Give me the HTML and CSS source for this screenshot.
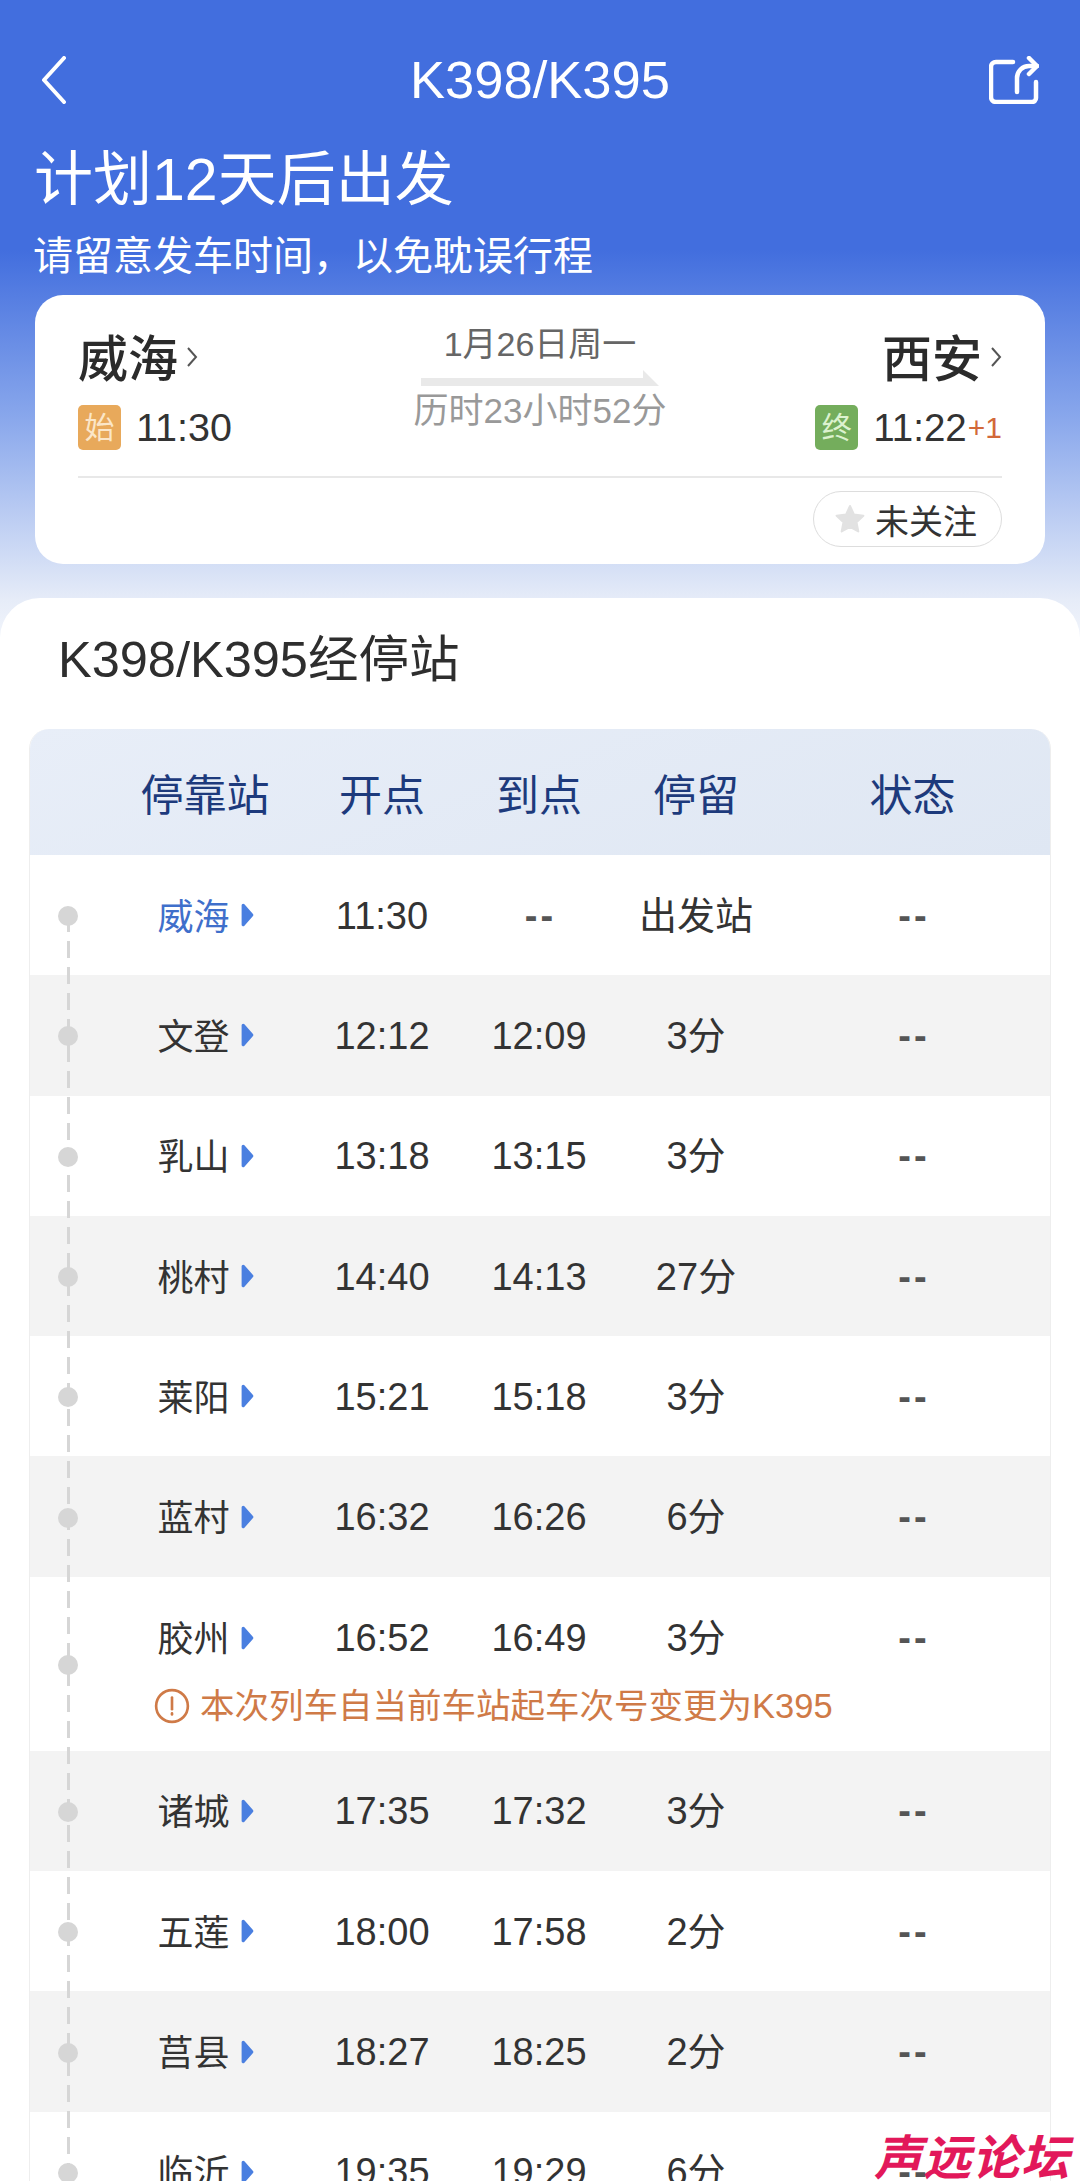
FILE: index.html
```html
<!DOCTYPE html>
<html lang="zh-CN">
<head>
  <meta charset="UTF-8" />
  <meta name="viewport" content="width=device-width, initial-scale=1.0" />
  <title>K398/K395</title>
  <link rel="stylesheet" href="styles.css">
</head>
<body>
  <div class="page">
    <header class="hero">
      <div class="nav">
        <svg class="back" viewBox="0 0 26 48"><path d="M23 2 3 24l20 22"/></svg>
        <div class="nav-title">K398/K395</div>
        <svg class="share" viewBox="0 0 50 48">
          <path d="M24 6H7a5 5 0 0 0-5 5v30a5 5 0 0 0 5 5h36a4 4 0 0 0 4-4V26"/>
          <path d="M28 36V22a12 12 0 0 1 12-12h8"/>
          <path d="M40 2l8 8-8 8"/>
        </svg>
      </div>
      <h1 class="headline">计划12天后出发</h1>
      <p class="subline">请留意发车时间，以免耽误行程</p>

      <section class="card">
        <div class="route">
          <div class="end">
            <div class="city">威海<svg class="chev" viewBox="0 0 12 22"><path d="M2 2l8 9-8 9"/></svg></div>
            <div class="when">
              <span class="badge badge-start">始</span>
              <span class="clock">11:30</span>
            </div>
          </div>
          <div class="middle">
            <div class="date">1月26日周一</div>
            <svg class="arrow" viewBox="0 0 238 16"><path d="M0 8h222V0l16 16H0z"/></svg>
            <div class="duration">历时23小时52分</div>
          </div>
          <div class="end end-right">
            <div class="city">西安<svg class="chev" viewBox="0 0 12 22"><path d="M2 2l8 9-8 9"/></svg></div>
            <div class="when">
              <span class="badge badge-stop">终</span>
              <span class="clock">11:22</span><span class="plus">+1</span>
            </div>
          </div>
        </div>
        <div class="card-foot">
          <div class="follow">
            <svg class="star" viewBox="0 0 32 32"><path d="M16 3l4 8.600 9.400 1.200-6.900 6.400 1.800 9.300L16 23.900l-8.300 4.600 1.800-9.300-6.900-6.400 9.400-1.200z"/></svg>
            未关注
          </div>
        </div>
      </section>
    </header>

    <main class="sheet">
      <h2 class="sheet-title">K398/K395经停站</h2>
      <div class="table">
        <div class="thead">
          <span></span><span>停靠站</span><span>开点</span><span>到点</span><span>停留</span><span>状态</span>
        </div>
        <div class="stops">
          <div class="row">
            <i class="dot"></i>
            <div class="station current">威海<svg viewBox="0 0 14 24"><path d="M3 3l8 9-8 9z"/></svg></div>
            <span>11:30</span><span class="none">--</span><span class="stay">出发站</span><span class="none">--</span>
          </div>
          <div class="row alt">
            <i class="dot"></i>
            <div class="station">文登<svg viewBox="0 0 14 24"><path d="M3 3l8 9-8 9z"/></svg></div>
            <span>12:12</span><span>12:09</span><span class="stay">3分</span><span class="none">--</span>
          </div>
          <div class="row">
            <i class="dot"></i>
            <div class="station">乳山<svg viewBox="0 0 14 24"><path d="M3 3l8 9-8 9z"/></svg></div>
            <span>13:18</span><span>13:15</span><span class="stay">3分</span><span class="none">--</span>
          </div>
          <div class="row alt">
            <i class="dot"></i>
            <div class="station">桃村<svg viewBox="0 0 14 24"><path d="M3 3l8 9-8 9z"/></svg></div>
            <span>14:40</span><span>14:13</span><span class="stay">27分</span><span class="none">--</span>
          </div>
          <div class="row">
            <i class="dot"></i>
            <div class="station">莱阳<svg viewBox="0 0 14 24"><path d="M3 3l8 9-8 9z"/></svg></div>
            <span>15:21</span><span>15:18</span><span class="stay">3分</span><span class="none">--</span>
          </div>
          <div class="row alt">
            <i class="dot"></i>
            <div class="station">蓝村<svg viewBox="0 0 14 24"><path d="M3 3l8 9-8 9z"/></svg></div>
            <span>16:32</span><span>16:26</span><span class="stay">6分</span><span class="none">--</span>
          </div>
          <div class="row row-tall">
            <i class="dot"></i>
            <div class="station">胶州<svg viewBox="0 0 14 24"><path d="M3 3l8 9-8 9z"/></svg></div>
            <span>16:52</span><span>16:49</span><span class="stay">3分</span><span class="none">--</span>
            <div class="note">
              <svg viewBox="0 0 34 34">
                <circle cx="17" cy="17" r="15"/>
                <path d="M17 9v11"/>
                <path d="M17 24v1"/>
              </svg>
              本次列车自当前车站起车次号变更为K395
            </div>
          </div>
          <div class="row alt">
            <i class="dot"></i>
            <div class="station">诸城<svg viewBox="0 0 14 24"><path d="M3 3l8 9-8 9z"/></svg></div>
            <span>17:35</span><span>17:32</span><span class="stay">3分</span><span class="none">--</span>
          </div>
          <div class="row">
            <i class="dot"></i>
            <div class="station">五莲<svg viewBox="0 0 14 24"><path d="M3 3l8 9-8 9z"/></svg></div>
            <span>18:00</span><span>17:58</span><span class="stay">2分</span><span class="none">--</span>
          </div>
          <div class="row alt">
            <i class="dot"></i>
            <div class="station">莒县<svg viewBox="0 0 14 24"><path d="M3 3l8 9-8 9z"/></svg></div>
            <span>18:27</span><span>18:25</span><span class="stay">2分</span><span class="none">--</span>
          </div>
          <div class="row">
            <i class="dot"></i>
            <div class="station">临沂<svg viewBox="0 0 14 24"><path d="M3 3l8 9-8 9z"/></svg></div>
            <span>19:35</span><span>19:29</span><span class="stay">6分</span><span class="none">--</span>
          </div>
        </div>
      </div>
    </main>

    <div class="watermark">声远论坛</div>
  </div>
</body>
</html>
```

FILE: styles.css
```css
* {
  box-sizing: border-box;
}

body {
  margin: 0;
  font-family: "Liberation Sans", "Noto Sans CJK SC", sans-serif;
  color: #333;
}

.page {
  position: relative;
  width: 1080px;
  height: 2181px;
  overflow: hidden;
  background: linear-gradient(#426ede 0, #426ede 250px, #8aa8ec 420px, #e6ecf8 600px, #f2f5fb 640px);
}

/* top part */
.hero {
  padding: 56px 35px 34px;
}

.nav {
  display: grid;
  grid-template-columns: 1fr auto 1fr;
  align-items: center;
  height: 48px;
  padding: 0 6px;
}

.back {
  width: 26px;
  height: 48px;
  fill: none;
  stroke: #fff;
  stroke-width: 4;
  stroke-linecap: round;
  stroke-linejoin: round;
}

.nav-title {
  font-size: 52.5px;
  line-height: 48px;
  color: #fff;
}

.share {
  justify-self: end;
  width: 50px;
  height: 48px;
  fill: none;
  stroke: #fff;
  stroke-width: 4.500;
  stroke-linecap: round;
  stroke-linejoin: round;
}

.headline {
  margin: 41px 0 0 -1px;
  font-size: 59px;
  line-height: 70px;
  font-weight: 400;
  color: #fff;
}

.subline {
  margin: 16px 0 14px -2px;
  font-size: 40px;
  line-height: 50px;
  color: #fff;
}

.card {
  height: 269px;
  padding: 27px 43px 0;
  background: #fff;
  border-radius: 28px;
}

.route {
  display: grid;
  grid-template-columns: 1fr auto 1fr;
}

.end {
  padding-top: 5px;
}

.end-right {
  display: flex;
  flex-direction: column;
  align-items: flex-end;
}

.city {
  display: flex;
  align-items: center;
  height: 60px;
  padding-bottom: 5px;
  font-size: 50px;
  font-weight: 500;
  color: #2b2b2b;
}

.chev {
  width: 12px;
  height: 22px;
  margin: 5px 0 0 8px;
  fill: none;
  stroke: #555;
  stroke-width: 2;
}

.when {
  display: flex;
  align-items: center;
  margin-top: 18px;
  height: 45px;
}

.badge {
  width: 43px;
  height: 45px;
  margin-right: 15px;
  border-radius: 5px;
  font-size: 30px;
  line-height: 45px;
  text-align: center;
}

.badge-start {
  background: #e8a95b;
  color: #fbe6c8;
}

.badge-stop {
  background: #74ad5c;
  color: #dcf2cf;
}

.clock {
  font-size: 39.5px;
  color: #333;
}

.end-right .clock {
  font-size: 38.5px;
}

.plus {
  margin-left: 1px;
  font-size: 30px;
  color: #d2693a;
}

.middle {
  text-align: center;
}

.date {
  font-size: 34px;
  line-height: 44px;
  color: #666;
}

.arrow {
  display: block;
  width: 238px;
  height: 16px;
  margin: 4px auto 3px;
  fill: #e9e9e9;
}

.duration {
  font-size: 35px;
  line-height: 44px;
  color: #999;
}

.card-foot {
  display: flex;
  justify-content: flex-end;
  margin-top: 26px;
  padding-top: 13px;
  border-top: 2px solid #e8e8e8;
}

.follow {
  display: flex;
  align-items: center;
  width: 189px;
  height: 56px;
  padding-left: 20px;
  border: 1.5px solid #ddd;
  border-radius: 28px;
  font-size: 34px;
  color: #333;
}

.star {
  width: 32px;
  height: 32px;
  margin-right: 9px;
  fill: #e2e2e2;
  stroke: #e2e2e2;
  stroke-width: 2;
  stroke-linejoin: round;
}

/* stops list */
.sheet {
  height: 1583px;
  padding: 32px 29px 0;
  background: #fff;
  border-radius: 40px 40px 0 0;
}

.sheet-title {
  margin: 0 0 39px 29px;
  font-size: 50.5px;
  line-height: 60px;
  font-weight: 400;
  color: #2e2e2e;
}

.table {
  width: 1022px;
  border: 1px solid #eee;
  border-top: none;
  border-radius: 20px 20px 0 0;
  overflow: hidden;
}

.thead,
.row {
  display: grid;
  grid-template-columns: 77px 196px 158px 156px 158px 275px;
  align-items: center;
  text-align: center;
}

.thead {
  height: 126px;
  background: linear-gradient(160deg, #e8eef8, #dfe7f3);
  font-size: 43px;
  color: #1d3a7c;
}

.stops {
  position: relative;
}

.stops::before {
  content: "";
  position: absolute;
  z-index: 1;
  left: 37px;
  top: 60px;
  bottom: 0;
  width: 3px;
  background: repeating-linear-gradient(#d6d6d6 0, #d6d6d6 17px, transparent 17px, transparent 26px);
}

.row {
  height: 120.3px;
  font-size: 38px;
  background: #fff;
}

.row.alt {
  background: #f3f3f3;
}

.row > span {
  padding-top: 2px;
}

.row > .stay {
  padding: 0 0 6px;
}

.row > .none {
  padding-left: 3px;
  font-weight: 700;
  letter-spacing: 3px;
  color: #555;
}

.row-tall {
  height: 174px;
  padding: 19px 0;
  grid-template-rows: 84px 52px;
}

.dot {
  position: relative;
  z-index: 2;
  width: 20px;
  height: 20px;
  margin: 2px 0 0 28px;
  border-radius: 50%;
  background: #d6d6d6;
}

.row-tall .dot {
  grid-row: 1 / span 2;
}

.station {
  display: flex;
  justify-content: center;
  align-items: center;
  gap: 10px;
  padding: 0 0 3px 2px;
  font-size: 36px;
}

.station svg {
  width: 15px;
  height: 26px;
  margin-top: 3px;
  fill: #4a7fe0;
  stroke: #4a7fe0;
  stroke-width: 3;
  stroke-linejoin: round;
}

.station.current {
  color: #3f6fcb;
}

.note {
  grid-column: 2 / -1;
  display: flex;
  align-items: center;
  gap: 10px;
  margin-left: 47px;
  font-size: 34.500px;
  line-height: 48px;
  color: #cf7a47;
}

.note svg {
  width: 36px;
  height: 36px;
  fill: none;
  stroke: #cf7a47;
  stroke-width: 2.500;
  stroke-linecap: round;
}

.watermark {
  position: absolute;
  right: 10px;
  bottom: 4px;
  font-family: "Noto Sans CJK SC", sans-serif;
  font-size: 48px;
  line-height: 46px;
  letter-spacing: 1px;
  font-weight: 700;
  font-style: italic;
  color: #e2185a;
}
```
